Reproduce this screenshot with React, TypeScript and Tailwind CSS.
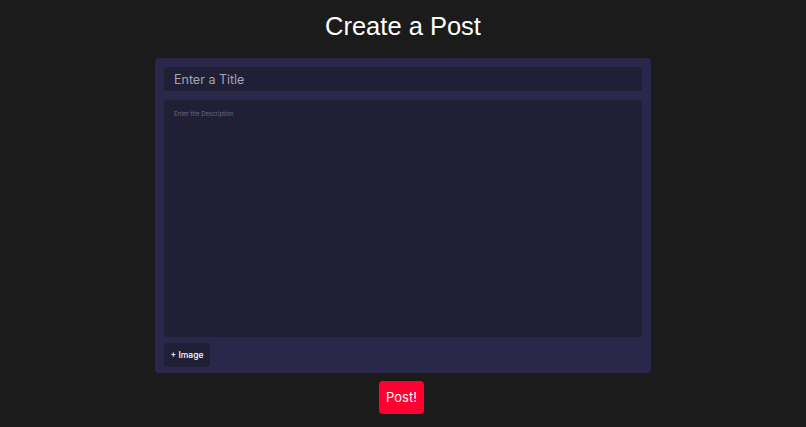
export default function App() {
  return (
    <div className="min-h-[427px] w-full bg-[#1b1b1b] flex flex-col items-center font-['Liberation_Sans',Arial,sans-serif]">
      <h1 className="mt-[11px] text-[25.5px] leading-[30px] text-white">Create a Post</h1>
      <div className="mt-[17px] w-[496px] rounded-[4px] bg-[#29284a] pl-[9px] pr-[9px] pt-[9px] pb-[6px] flex flex-col font-['Inter',sans-serif]">
        <input
          className="h-[24px] w-full rounded-[4px] bg-[#201f35] px-[10px] text-[12.5px] text-white placeholder:text-[#a5a4b3] outline-none"
          placeholder="Enter a Title"
        />
        <textarea
          className="mt-[9px] h-[237px] w-full resize-none rounded-[4px] bg-[#201f35] px-[10px] py-[9px] text-[6px] text-white placeholder:text-[#6c6b78] outline-none"
          placeholder="Enter the Description"
        />
        <div className="mt-[6px] flex">
          <button className="h-[24px] w-[46px] rounded-[4px] bg-[#201f35] text-[8.5px] font-medium text-white">+ Image</button>
        </div>
      </div>
      <button className="mt-[8px] mr-[3px] h-[33px] w-[45px] rounded-[4px] bg-[#ff0030] text-[13px] text-white font-['Inter',sans-serif]">Post!</button>
    </div>
  );
}
